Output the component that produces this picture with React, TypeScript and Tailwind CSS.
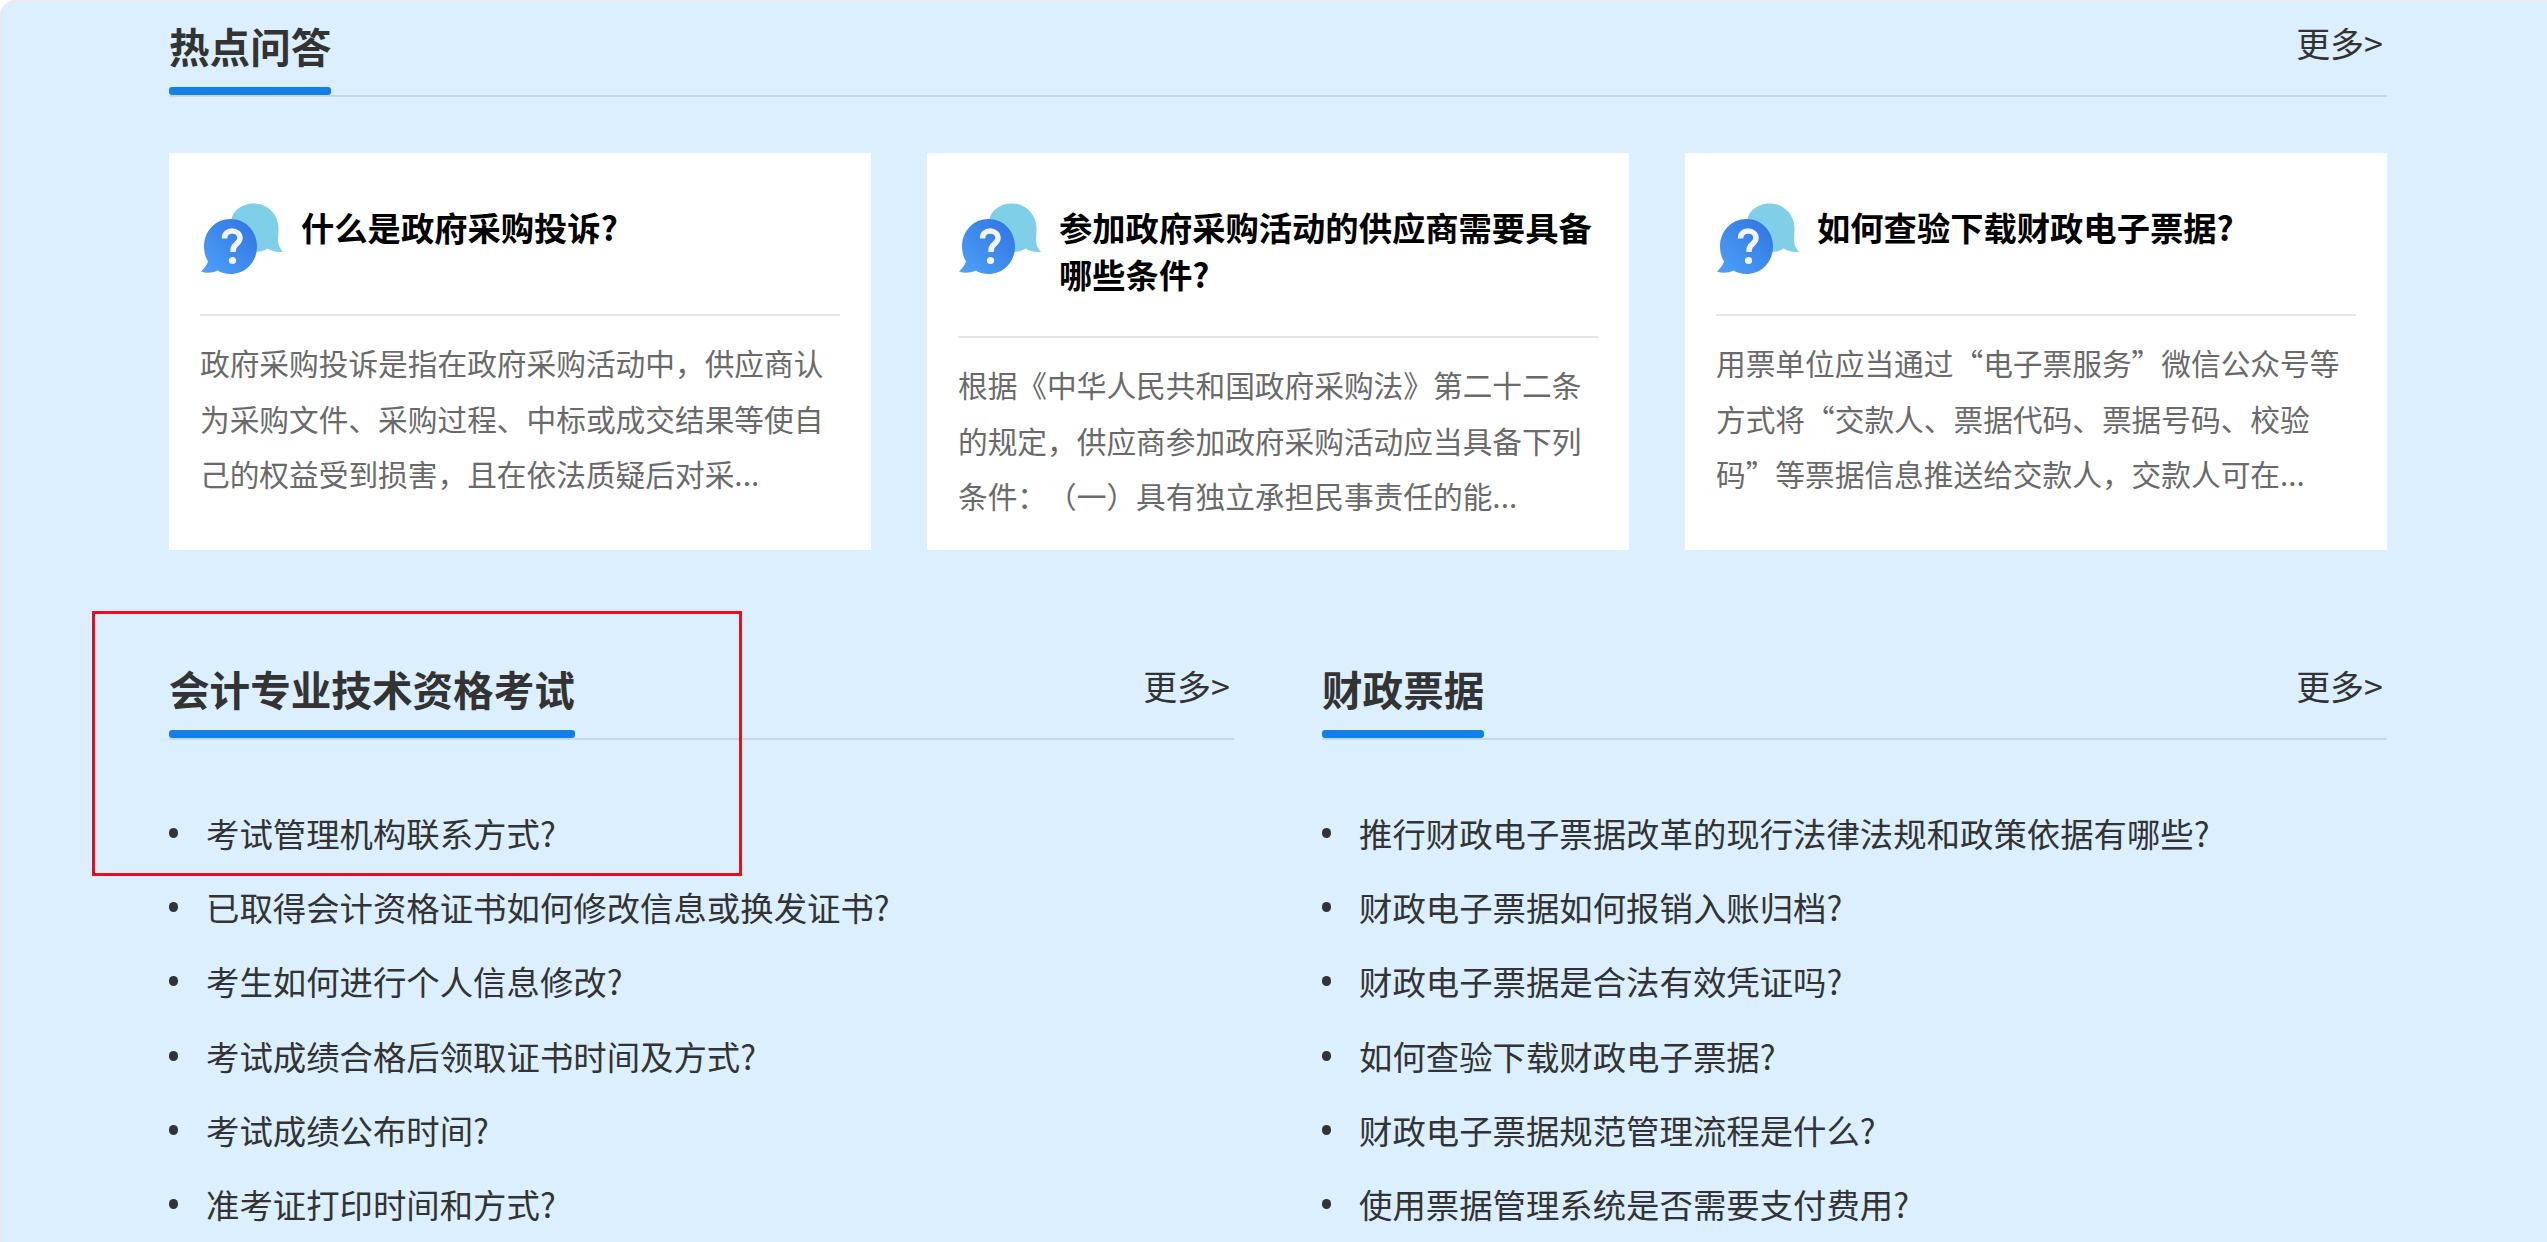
import React from 'react';

const font = "font-['Noto_Sans_CJK_SC','Liberation_Sans',sans-serif]";

const hotCards = [
    {
        title: '什么是政府采购投诉?',
        body: '政府采购投诉是指在政府采购活动中，供应商认为采购文件、采购过程、中标或成交结果等使自己的权益受到损害，且在依法质疑后对采...',
    },
    {
        title: '参加政府采购活动的供应商需要具备哪些条件?',
        body: '根据《中华人民共和国政府采购法》第二十二条的规定，供应商参加政府采购活动应当具备下列条件：（一）具有独立承担民事责任的能...',
    },
    {
        title: '如何查验下载财政电子票据?',
        body: '用票单位应当通过“电子票服务”微信公众号等方式将“交款人、票据代码、票据号码、校验码”等票据信息推送给交款人，交款人可在...',
    },
];

const examList = [
    '考试管理机构联系方式?',
    '已取得会计资格证书如何修改信息或换发证书?',
    '考生如何进行个人信息修改?',
    '考试成绩合格后领取证书时间及方式?',
    '考试成绩公布时间?',
    '准考证打印时间和方式?',
];

const billList = [
    '推行财政电子票据改革的现行法律法规和政策依据有哪些?',
    '财政电子票据如何报销入账归档?',
    '财政电子票据是合法有效凭证吗?',
    '如何查验下载财政电子票据?',
    '财政电子票据规范管理流程是什么?',
    '使用票据管理系统是否需要支付费用?',
];

function QuestionIcon({ id }: { id: string }) {
    return (
        <svg viewBox="1 0 83 74" className="w-[84px] h-[74px] shrink-0 blur-[0.4px]">
            <defs>
                <linearGradient id={id} x1="0" y1="1" x2="1" y2="0">
                    <stop offset="0" stopColor="#4ea2f9" />
                    <stop offset="1" stopColor="#2f72e2" />
                </linearGradient>
            </defs>
            {/* back bubble */}
            <path d="M54.5 0.5C68 0.5 79 11.5 79 25C79 30 78.5 34 78.5 37C78.5 42 80.5 46 83.5 49C77 49.5 72 48 68 45.5C60 51 48 50 40 42C32 34 28 16 36 8C41 3 47 0.5 54.5 0.5Z" fill="#7fcfe8" />
            {/* front bubble */}
            <path d="M31 16C46 16 57.5 28 57.5 43.5C57.5 59 46 71 31 71C26 71 21.5 69.5 18 67.5C13 70 7 70.5 1.5 68.5C5 65 7.5 62 8.5 58.5C6 54 4.5 49 4.5 43.5C4.5 28 16 16 31 16Z" fill={`url(#${id})`} />
            <path d="M25 35.5C25 30.5 28 28 32.5 28C37 28 40.5 31 40.5 35C40.5 39 37 40.5 35 43C33.5 45 33.5 47 33.5 49" fill="none" stroke="#f2f4f8" strokeWidth="5.5" />
            <circle cx="33" cy="57.5" r="3.6" fill="#f2f4f8" />
        </svg>
    );
}

function SectionHeader({ title }: { title: string }) {
    return (
        <div className="flex justify-between border-b-2 border-[#c5d8e8]">
            <div>
                <h2 className="text-[40.6px] leading-[54px] font-bold text-[#333]">{title}</h2>
                <div className="mt-[14px] h-[8px] rounded-[3px] bg-[#1380ea]" />
            </div>
            <a className="mr-[4px] text-[34px] leading-[48px] text-[#333]">更多&gt;</a>
        </div>
    );
}

function FaqList({ items }: { items: string[] }) {
    return (
        <ul className="mt-[56px] flex flex-col">
            {items.map((item) => (
                <li key={item} className="flex items-center h-[74.2px] text-[33.4px] text-[#333]">
                    <span className="w-[9px] h-[10px] rounded-full bg-[#333] mr-[28px]" />
                    {item}
                </li>
            ))}
        </ul>
    );
}

export default function App() {
    return (
        <div className={`${font} relative h-[1242px] overflow-hidden bg-[#dbeffe] border-t-2 border-l-2 border-[#e8e9f1] rounded-tl-[16px]`}>
            <div className="ml-[167px] w-[2218px]">
                {/* 热点问答 */}
                <section className="pt-[17px]">
                    <SectionHeader title="热点问答" />
                    <div className="mt-[56px] grid grid-cols-3 gap-x-[56px]">
                        {hotCards.map((card, i) => (
                            <div key={card.title} className="bg-white h-[397px] px-[31px] pt-[50px]">
                                <div className="flex gap-[17px] pb-[37px] border-b-2 border-[#e6e6e6]">
                                    <QuestionIcon id={`qBlue${i}`} />
                                    <h3 className="mb-[2px] text-[33.3px] leading-[47px] font-bold text-black">{card.title}</h3>
                                </div>
                                <p className="mt-[19px] text-[29.7px] leading-[55.5px] text-[#6a6a6a] line-clamp-3 [text-spacing-trim:space-all]">{card.body}</p>
                            </div>
                        ))}
                    </div>
                </section>

                <div className="mt-[112px] grid grid-cols-2 gap-x-[88px]">
                    <section>
                        <SectionHeader title="会计专业技术资格考试" />
                        <FaqList items={examList} />
                    </section>
                    <section>
                        <SectionHeader title="财政票据" />
                        <FaqList items={billList} />
                    </section>
                </div>
            </div>

            {/* red highlight drawn over the page */}
            <div className="absolute left-[90px] top-[609px] w-[650px] h-[265px] border-[3px] border-[#e60f1f]" />
        </div>
    );
}
